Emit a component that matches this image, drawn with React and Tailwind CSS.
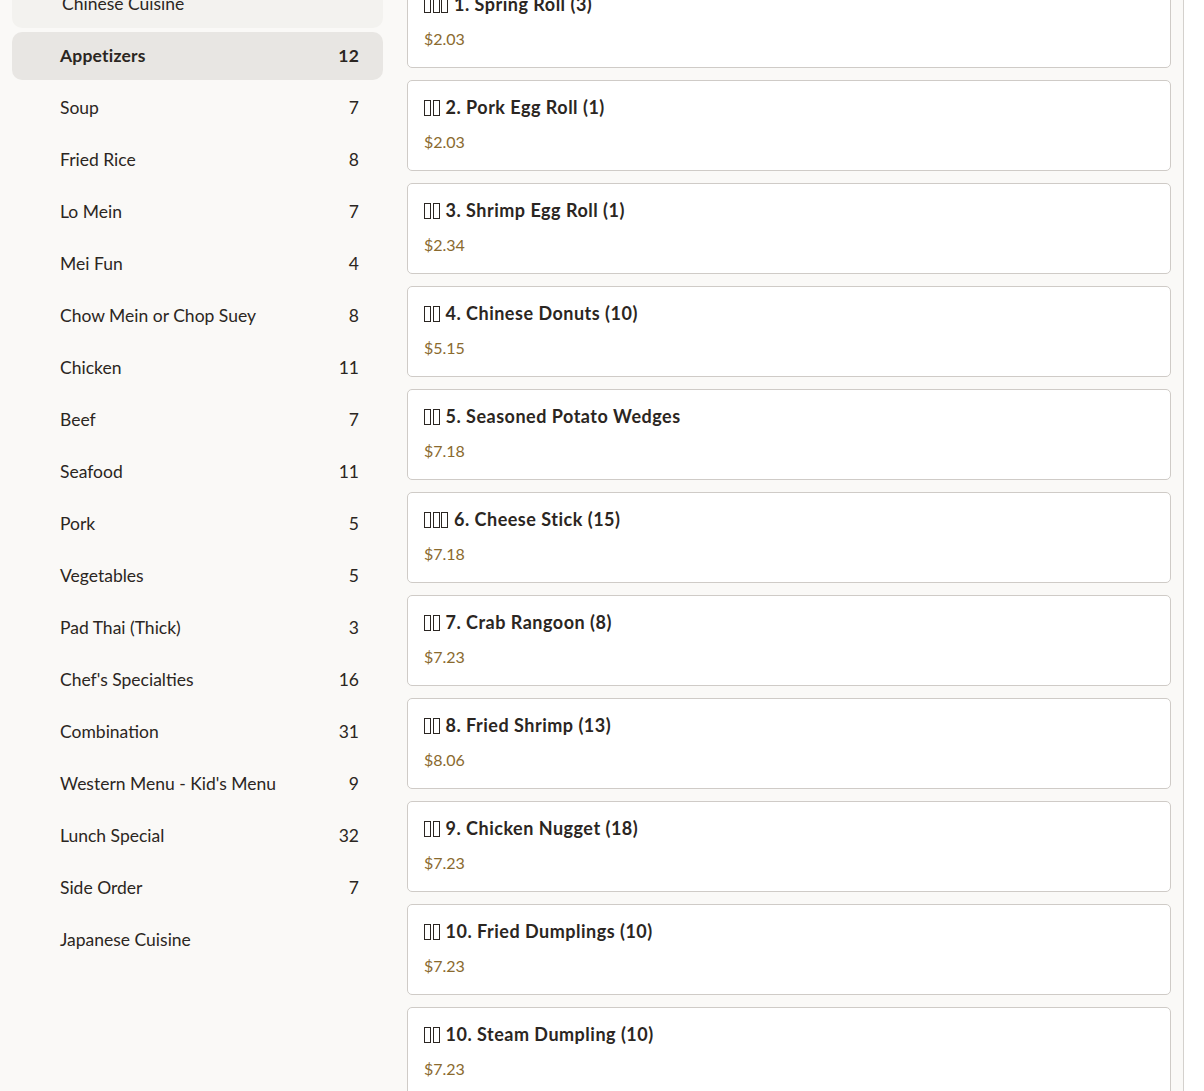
import React from 'react';

const categories = [
  { name: 'Appetizers', count: 12, active: true },
  { name: 'Soup', count: 7 },
  { name: 'Fried Rice', count: 8 },
  { name: 'Lo Mein', count: 7 },
  { name: 'Mei Fun', count: 4 },
  { name: 'Chow Mein or Chop Suey', count: 8 },
  { name: 'Chicken', count: 11 },
  { name: 'Beef', count: 7 },
  { name: 'Seafood', count: 11 },
  { name: 'Pork', count: 5 },
  { name: 'Vegetables', count: 5 },
  { name: 'Pad Thai (Thick)', count: 3 },
  { name: "Chef's Specialties", count: 16 },
  { name: 'Combination', count: 31 },
  { name: "Western Menu - Kid's Menu", count: 9 },
  { name: 'Lunch Special', count: 32 },
  { name: 'Side Order', count: 7 },
];

const items = [
  { cn: 3, name: '1. Spring Roll (3)', price: '$2.03' },
  { cn: 2, name: '2. Pork Egg Roll (1)', price: '$2.03' },
  { cn: 2, name: '3. Shrimp Egg Roll (1)', price: '$2.34' },
  { cn: 2, name: '4. Chinese Donuts (10)', price: '$5.15' },
  { cn: 2, name: '5. Seasoned Potato Wedges', price: '$7.18' },
  { cn: 3, name: '6. Cheese Stick (15)', price: '$7.18' },
  { cn: 2, name: '7. Crab Rangoon (8)', price: '$7.23' },
  { cn: 2, name: '8. Fried Shrimp (13)', price: '$8.06' },
  { cn: 2, name: '9. Chicken Nugget (18)', price: '$7.23' },
  { cn: 2, name: '10. Fried Dumplings (10)', price: '$7.23' },
  { cn: 2, name: '10. Steam Dumpling (10)', price: '$7.23' },
];

// missing-glyph boxes where the chinese name failed to render
function Tofu({ n }) {
  return (
    <span className="inline-flex gap-[1.5px] mr-[6px] align-[-2px]">
      {Array.from({ length: n }).map((_, i) => (
        <span key={i} className="inline-block w-[7px] h-[16px] border border-[#2b2622]" />
      ))}
    </span>
  );
}

export default function App() {
  return (
    <div
      className="flex h-[1091px] overflow-hidden bg-[#faf9f7] text-[#2b2622]"
      style={{ fontFamily: 'Lato, "Noto Sans", sans-serif' }}
    >
      <aside className="w-[395px] shrink-0 px-3 -mt-[20px] flex flex-col gap-1">
        <div className="h-12 flex items-center pt-px pl-[50px] rounded-[10px] bg-[#f3f2ef] text-[17.5px]">
          Chinese Cuisine
        </div>
        {categories.map((c) => (
          <div
            key={c.name}
            className={`h-12 flex items-center justify-between pt-px pl-12 pr-6 rounded-[10px] text-[17.5px] ${
              c.active ? 'bg-[#e8e6e3] font-bold tracking-[0.2px]' : ''
            }`}
          >
            <span>{c.name}</span>
            <span>{c.count}</span>
          </div>
        ))}
        <div className="h-12 flex items-center pt-px pl-12 text-[17.5px]">Japanese Cuisine</div>
      </aside>

      <main className="flex-1 px-3 -mt-[23px] flex flex-col gap-3">
        {items.map((it, i) => (
          <div key={i} className="shrink-0 bg-white border border-[#cfcbc7] rounded-[5px] px-4 pt-[15px] pb-4">
            <div className="text-lg font-bold leading-[22px] tracking-[0.5px]">
              <Tofu n={it.cn} />
              {it.name}
            </div>
            <div className="mt-[12px] text-base leading-6 text-[#8a6a2e]">{it.price}</div>
          </div>
        ))}
      </main>

      <div className="w-[21px] shrink-0 bg-white border-l border-[#d4d1cd]" />
    </div>
  );
}
